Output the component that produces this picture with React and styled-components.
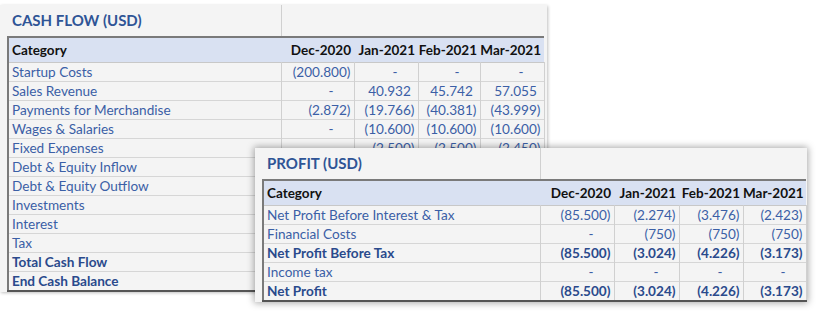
import styled, { createGlobalStyle } from "styled-components";

const GlobalStyle = createGlobalStyle`
  body {
    margin: 0;
    background: #ffffff;
    font-family: Lato, "Open Sans", sans-serif;
  }
`;

const Canvas = styled.div`
  position: relative;
  width: 817px;
  height: 317px;
  overflow: hidden;
`;

const Sheet = styled.section`
  background: #f4f4f4;
  width: fit-content;
  padding: 0 ${(p) => p.$trail}px 0 ${(p) => p.$inset}px;
  box-shadow: ${(p) => (p.$floating ? "0 0 7px 1px rgba(0, 0, 0, 0.35)" : "1px 1px 3px rgba(0, 0, 0, 0.25)")};
  ${(p) =>
    p.$floating
      ? `
    position: absolute;
    left: ${p.$left}px;
    top: ${p.$top}px;
  `
      : `
    margin-top: 5px;
  `}
`;

const Grid = styled.table`
  border-collapse: collapse;
  table-layout: fixed;
  font-size: 13.6px;
  line-height: 1;
`;

const TitleCell = styled.td`
  height: 31px;
  padding: 0 0 0 4px;
  font-size: 15px;
  font-weight: 700;
  color: #2f5496;
  vertical-align: middle;
`;

const TitleFill = styled.td`
  border-left: 1px solid #d0d0d0;
`;

const HeadRow = styled.tr`
  background: #d9e1f2;
  border-top: 2px solid #7a7a7a;
  border-left: 2px solid #7a7a7a;
  border-bottom: 1px solid #c8c8c8;
`;

const HeadCell = styled.th`
  height: 23px;
  padding: 1px ${(p) => (p.$left ? 0 : 3)}px 0 ${(p) => (p.$left ? 3 : 0)}px;
  text-align: ${(p) => (p.$left ? "left" : "right")};
  font-weight: 700;
  font-size: 13.5px;
  color: #111111;
  white-space: nowrap;
`;

const Row = styled.tr`
  border-left: 2px solid #7a7a7a;
  border-bottom: ${(p) => (p.$closing ? "2px solid #555555" : "1px solid #d6d6d6")};
  border-top: ${(p) => (p.$strong ? "1px solid #3f3f3f" : "none")};
  color: ${(p) => (p.$strong ? "#2a4a8c" : "#3b5fa6")};
  font-weight: ${(p) => (p.$strong ? 700 : 400)};
`;

const LabelCell = styled.td`
  height: 17px;
  padding: 0 0 1px 3px;
  vertical-align: bottom;
  white-space: nowrap;
  border-right: 1px solid #d0d0d0;
`;

const ValueCell = styled.td`
  padding: 0 ${(p) => (p.$dash ? 20 : 3)}px 1px 0;
  vertical-align: bottom;
  text-align: right;
  white-space: nowrap;
  border-right: 1px solid #d0d0d0;
`;

const Ghost = styled.span`
  visibility: hidden;
`;

const Value = ({ v }) => {
  if (v === "-") return <ValueCell $dash>-</ValueCell>;
  if (v.startsWith("(")) return <ValueCell>{v}</ValueCell>;
  return (
    <ValueCell>
      {v}
      <Ghost>)</Ghost>
    </ValueCell>
  );
};

const months = ["Dec-2020", "Jan-2021", "Feb-2021", "Mar-2021"];

const cashRows = [
  { label: "Startup Costs", values: ["(200.800)", "-", "-", "-"] },
  { label: "Sales Revenue", values: ["-", "40.932", "45.742", "57.055"] },
  { label: "Payments for Merchandise", values: ["(2.872)", "(19.766)", "(40.381)", "(43.999)"] },
  { label: "Wages & Salaries", values: ["-", "(10.600)", "(10.600)", "(10.600)"] },
  { label: "Fixed Expenses", values: ["-", "(2.500)", "(2.500)", "(2.450)"] },
  { label: "Debt & Equity Inflow", values: ["-", "-", "-", "-"] },
  { label: "Debt & Equity Outflow", values: ["-", "-", "-", "-"] },
  { label: "Investments", values: ["-", "-", "-", "-"] },
  { label: "Interest", values: ["-", "(750)", "(750)", "(750)"] },
  { label: "Tax", values: ["-", "-", "-", "-"] },
  { label: "Total Cash Flow", strong: true, values: ["(203.672)", "7.316", "(8.489)", "(744)"] },
  { label: "End Cash Balance", strong: true, closing: true, values: ["(203.672)", "(196.356)", "(204.845)", "(205.589)"] },
];

const profitRows = [
  { label: "Net Profit Before Interest & Tax", values: ["(85.500)", "(2.274)", "(3.476)", "(2.423)"] },
  { label: "Financial Costs", values: ["-", "(750)", "(750)", "(750)"] },
  { label: "Net Profit Before Tax", strong: true, values: ["(85.500)", "(3.024)", "(4.226)", "(3.173)"] },
  { label: "Income tax", values: ["-", "-", "-", "-"] },
  { label: "Net Profit", strong: true, closing: true, values: ["(85.500)", "(3.024)", "(4.226)", "(3.173)"] },
];

const Report = ({ title, rows, widths, ...sheet }) => {
  const total = widths.reduce((a, b) => a + b, 0);
  return (
    <Sheet {...sheet}>
      <Grid style={{ width: total }}>
        <colgroup>
          {widths.map((w, i) => (
            <col key={i} style={{ width: w }} />
          ))}
        </colgroup>
        <tbody>
          <tr>
            <TitleCell>{title}</TitleCell>
            <TitleFill colSpan={4} />
          </tr>
          <HeadRow>
            <HeadCell $left>Category</HeadCell>
            {months.map((m) => (
              <HeadCell key={m}>{m}</HeadCell>
            ))}
          </HeadRow>
          {rows.map((r) => (
            <Row key={r.label} $strong={r.strong} $closing={r.closing}>
              <LabelCell>{r.label}</LabelCell>
              {r.values.map((v, i) => (
                <Value key={i} v={v} />
              ))}
            </Row>
          ))}
        </tbody>
      </Grid>
    </Sheet>
  );
};

export default function App() {
  return (
    <>
      <GlobalStyle />
      <Canvas>
        <Report
          title="CASH FLOW (USD)"
          rows={cashRows}
          widths={[273, 73, 64, 62, 64]}
          $inset={7}
          $trail={2}
        />
        <Report
          title="PROFIT (USD)"
          rows={profitRows}
          widths={[277, 74, 65, 64, 63]}
          $inset={7}
          $trail={0}
          $floating
          $left={255}
          $top={148}
        />
      </Canvas>
    </>
  );
}
